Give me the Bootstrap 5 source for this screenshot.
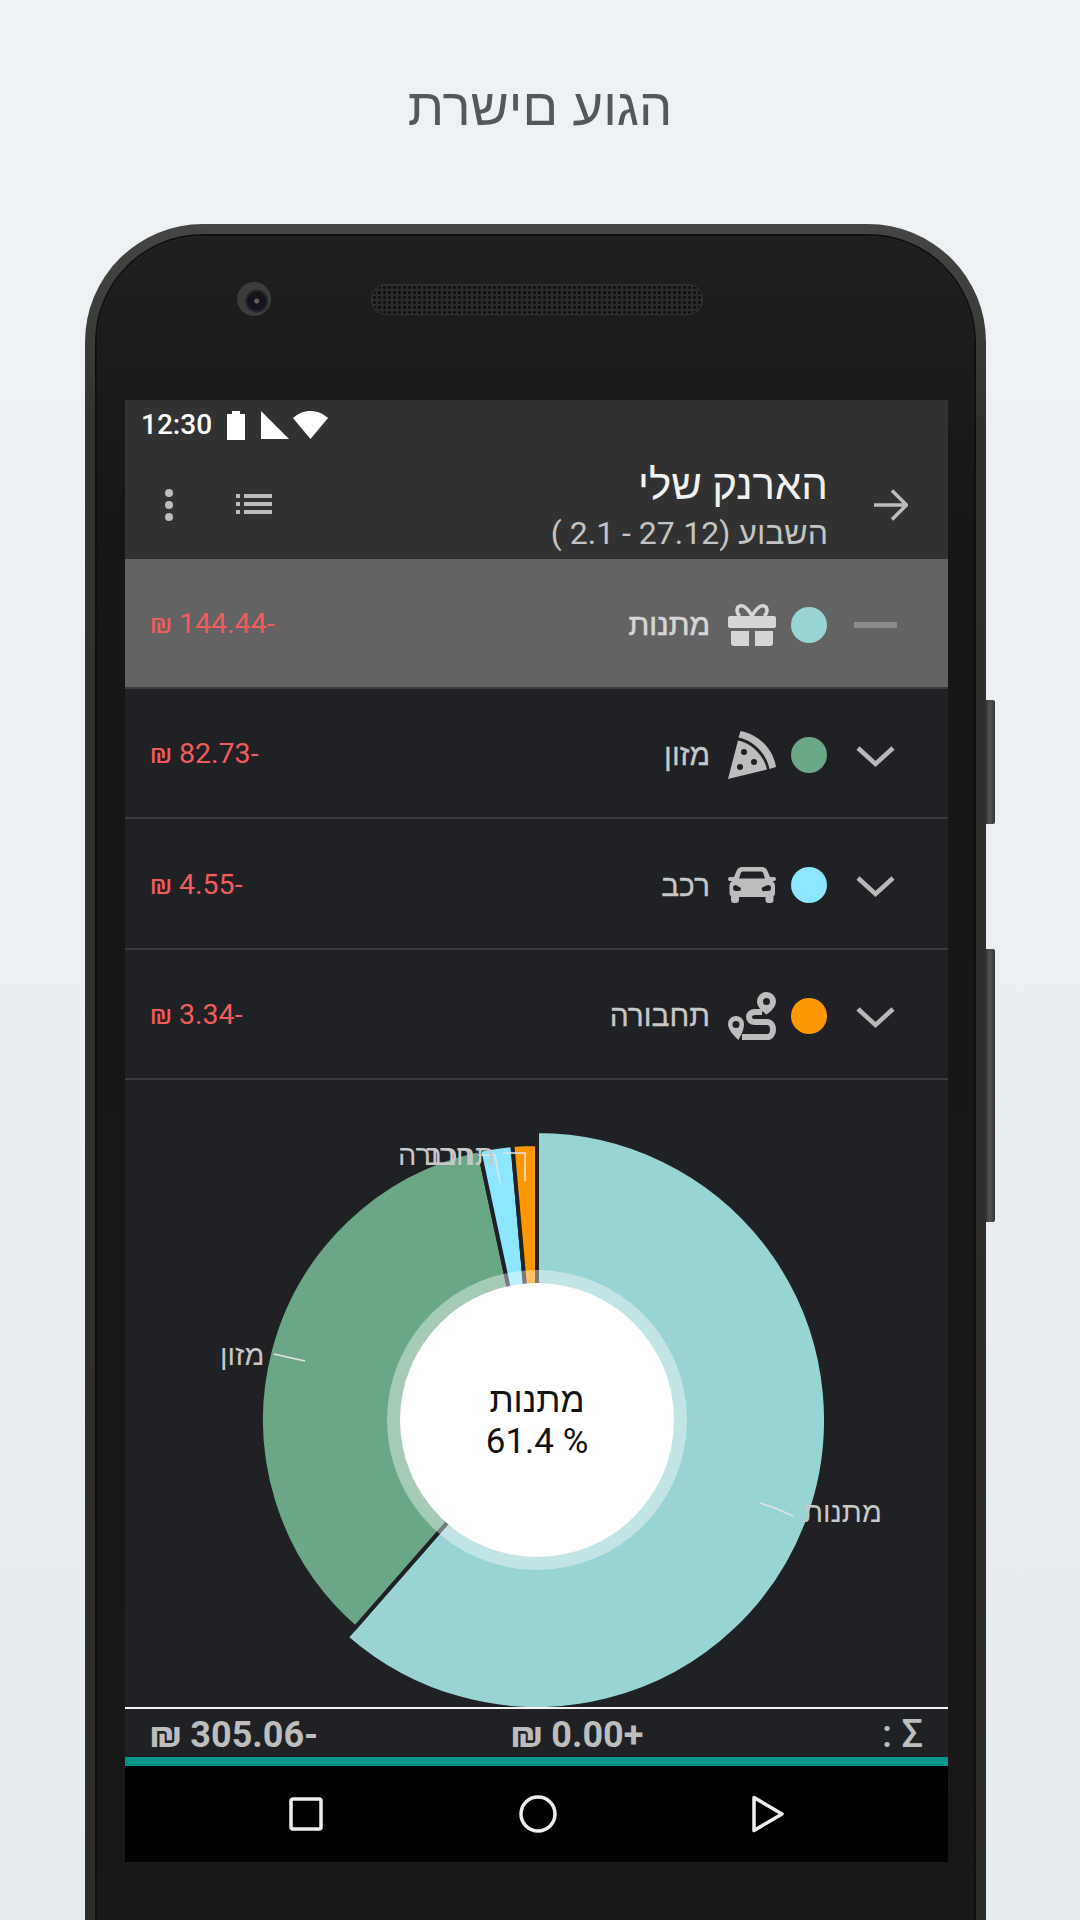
<!DOCTYPE html>
<html lang="he">
<head>
  <meta charset="UTF-8">
  <meta name="viewport" content="width=device-width, initial-scale=1.0">
  <title>הגוע םישרת</title>
  <link href="https://cdn.jsdelivr.net/npm/bootstrap@5.3.0/dist/css/bootstrap.min.css" rel="stylesheet">
  <style>
    html, body { height: 1920px; overflow: hidden; }
    body {
      background: linear-gradient(180deg, #eef2f5 0%, #e6ebee 100%);
      font-family: Roboto, "Liberation Sans", sans-serif;
    }
    .page-head { height: 224px; padding-top: 74px; }
    .page-head h1 { font-size: 52.5px; font-weight: 400; color: #555759; line-height: 66px; margin: 0; font-family: "Liberation Sans", sans-serif; }

    .phone-frame {
      position: relative;
      width: 901px;
      height: 1696px;
      margin-left: 85px;
      padding: 12px 12px 0 12px;
      background: linear-gradient(180deg, #454543 0%, #31312f 12%, #2c2c2a 100%);
      border-radius: 118px 118px 0 0;
    }
    .phone-bezel {
      height: 100%;
      padding: 164px 26px 0 28px;
      background: linear-gradient(180deg, #1f1f1f 0%, #161616 18%, #181818 100%);
      border-radius: 106px 106px 0 0;
      box-shadow: 0 0 0 2px #0f0f0f;
    }
    .side-key {
      position: absolute;
      left: 901px;
      width: 9px;
      background: linear-gradient(90deg, #3a383a 0%, #555256 45%, #343234 100%);
      border-radius: 0 2px 2px 0;
    }
    .side-key-a { top: 476px; height: 124px; }
    .side-key-b { top: 725px; height: 273px; }
    .cam-lens {
      position: absolute;
      left: 152px; top: 58px;
      width: 34px; height: 34px;
      border-radius: 50%;
      background: radial-gradient(circle at 58% 56%, #6d5a5a 0 2px, #14141c 3px 9px, #262628 10px 11px, #3c3c3c 12px);
    }
    .ear-grille {
      position: absolute;
      left: 287px; top: 61px;
      width: 330px; height: 29px;
      border-radius: 14px;
      background-color: #2a2a2a;
      background-image: radial-gradient(circle, #0e0e0e 1.2px, transparent 1.6px);
      background-size: 5px 5px;
      box-shadow: 0 0 0 1px #333;
    }

    .app-screen { width: 823px; height: 1462px; background: #202125; color: #ccc; }
    .app-head { height: 159px; background: #323232; }
    .status-line { height: 50px; padding-left: 16px; color: #fff; font-size: 28px; font-weight: 500; line-height: 1; }
    .status-line .clock { margin-right: 15px; }
    .status-line .sig-mark { margin-right: 4px; }
    .title-line { height: 109px; }
    .head-arrow { margin-right: 40px; margin-left: 46px; }
    .head-words { margin-top: 8px; }
    .head-title { font-size: 42px; line-height: 48px; color: #f2f2f2; }
    .head-sub { font-size: 32px; line-height: 48px; color: #c4c4c4; }
    .head-tools { margin-right: auto; padding-left: 40px; gap: 63px; }

    .cat-row { height: 130px; border-bottom: 2px solid #3b3c40; padding: 3px 51px 0 25px; font-size: 30px; }
    .cat-row.is-open { background: #636363; }
    .cat-row.is-open .cat-name { -webkit-text-stroke: .6px #d6d6d6; color: #d6d6d6; }
    .cat-row.row-tall { height: 131px; }
    .row-toggle { width: 43px; }
    .row-chevron { margin-top: 4px; }
    .dot-mark { width: 36px; height: 36px; border-radius: 50%; margin-right: 27px; }
    .cat-glyph { width: 48px; margin-right: 15px; }
    .cat-name { margin-right: 18px; color: #c8c8c8; -webkit-text-stroke: .3px #c8c8c8; }
    .cat-sum { margin-right: auto; color: #f25c5c; font-size: 28.5px; }

    .chart-box { height: 627px; }
    .chart-box svg { display: block; }
    .pie-tag { font-size: 29px; fill: #c8c8c8; }
    .pie-mid { font-size: 35px; fill: #111; }

    .sum-strip {
      height: 59px;
      border-top: 2px solid #f4f4f4;
      border-bottom: 9px solid #009688;
      padding: 3px 25px 0 25px;
      font-size: 36px;
      font-weight: 700;
      color: #bdbdbd;
    }
    .sum-out { width: 361px; }
    .sum-sign { font-size: 38px; font-weight: 500; }
    .nav-strip { height: 96px; background: #000; padding-left: 164px; padding-right: 164px; }
  </style>
</head>
<body>

<div class="page-head text-center">
  <h1 dir="rtl">הגוע םישרת</h1>
</div>

<div class="phone-frame">
  <div class="side-key side-key-a"></div>
  <div class="side-key side-key-b"></div>
  <div class="phone-bezel">
    <div class="cam-lens"></div>
    <div class="ear-grille"></div>

    <div class="app-screen d-flex flex-column" dir="rtl">
      <div class="app-head">
        <div class="status-line d-flex align-items-center" dir="ltr">
          <span class="clock">12:30</span>
          <svg width="18" height="29" viewBox="0 0 18 29" class="me-3"><path fill="#fff" d="M5 0h8v3h5v26H0V3h5z"/></svg>
          <svg class="sig-mark" width="28" height="28" viewBox="0 0 28 28"><path fill="#fff" d="M0 0l28 28H0z"/></svg>
          <svg width="35" height="28" viewBox="0 0 35 28"><path fill="#fff" d="M17.5 28L0 7C5 2.500 11 0 17.500 0S30 2.500 35 7z"/></svg>
        </div>
        <div class="title-line d-flex align-items-center">
          <svg class="head-arrow" width="34" height="32" viewBox="0 0 34 32"><path fill="none" stroke="#bdbdbd" stroke-width="3.500" d="M0 16h32M18 1.500L32.500 16 18 30.500"/></svg>
          <div class="head-words">
            <div class="head-title">הארנק שלי</div>
            <div class="head-sub">השבוע (27.12 - 2.1 )</div>
          </div>
          <div class="head-tools d-flex align-items-center">
            <svg width="36" height="21" viewBox="0 0 36 21"><path fill="#bdbdbd" d="M0 0h4v4H0zM8 0h28v4H8zM0 8h4v4H0zM8 8h28v4H8zM0 16h4v4H0zM8 16h28v4H8z"/></svg>
            <svg width="8" height="32" viewBox="0 0 8 32"><g fill="#bdbdbd"><circle cx="4" cy="4" r="4"/><circle cx="4" cy="16" r="4"/><circle cx="4" cy="28" r="4"/></g></svg>
          </div>
        </div>
      </div>

      <div class="cat-row is-open d-flex align-items-center">
        <svg class="row-toggle" height="6" viewBox="0 0 43 6"><path fill="#8c8c8c" d="M0 0h43v6H0z"/></svg>
        <span class="dot-mark" style="background:#98d4d4"></span>
        <svg class="cat-glyph" height="42" viewBox="0 0 48 42"><g fill="#d6d6d6"><path d="M2 12h44a2 2 0 0 1 2 2v8a2 2 0 0 1-2 2H2a2 2 0 0 1-2-2v-8a2 2 0 0 1 2-2zM3 27h18v15H6a3 3 0 0 1-3-3zM27 27h18v12a3 3 0 0 1-3 3H27z"/></g><path fill="none" stroke="#d6d6d6" stroke-width="3.500" d="M24 12C20 4 15 1 12 2c-4 1-4 7 0 10M24 12c4-8 9-11 12-10 4 1 4 7 0 10"/></svg>
        <span class="cat-name">מתנות</span>
        <span class="cat-sum">-144.44 ₪</span>
      </div>

      <div class="cat-row d-flex align-items-center">
        <svg class="row-toggle row-chevron" height="24" viewBox="0 0 43 24"><path fill="none" stroke="#b8b8b8" stroke-width="4.500" d="M4 3l17.500 16L39 3"/></svg>
        <span class="dot-mark" style="background:#6aa786"></span>
        <svg class="cat-glyph" height="48" viewBox="0 0 48 48"><g fill="#bdbdbd"><path fill-rule="evenodd" d="M10 9.500C23 12 36 24 39 38.500L0 48zM16 18a3 3 0 1 0 0 6 3 3 0 0 0 0-6zM26 28a3 3 0 1 0 0 6 3 3 0 0 0 0-6zM12 33a3 3 0 1 0 0 6 3 3 0 0 0 0-6z"/><path d="M12.500 0C30 3.500 45 17 48 36l-6.500 2C38 22 26 10 10.500 6.500z"/></g></svg>
        <span class="cat-name">מזון</span>
        <span class="cat-sum">-82.73 ₪</span>
      </div>

      <div class="cat-row row-tall d-flex align-items-center">
        <svg class="row-toggle row-chevron" height="24" viewBox="0 0 43 24"><path fill="none" stroke="#b8b8b8" stroke-width="4.500" d="M4 3l17.500 16L39 3"/></svg>
        <span class="dot-mark" style="background:#8ce6ff"></span>
        <svg class="cat-glyph" height="36" viewBox="0 0 48 36"><path fill="#bdbdbd" fill-rule="evenodd" d="M14 0h20c2.500 0 4.500 1.500 5.500 4L42 10h4a2 2 0 0 1 2 2c0 1-1 2-2 2h-1.500c1.500 1 2.500 3 2.500 5v7c0 1.500-.5 2.500-1.500 3v4a3 3 0 0 1-3 3h-2a3 3 0 0 1-3-3v-3H11v3a3 3 0 0 1-3 3H6a3 3 0 0 1-3-3v-4c-1-.5-1.500-1.500-1.500-3v-7c0-2 1-4 2.500-5H2c-1 0-2-1-2-2a2 2 0 0 1 2-2h4l2.500-6c1-2.500 3-4 5.500-4zM15 4.500c-1 0-1.800.5-2.200 1.500L11 11.500h26L35.200 6c-.4-1-1.200-1.500-2.200-1.500zM8 18a3 3 0 0 0 0 6h3a2 2 0 0 0 0-4zM40 18l-5 2a2 2 0 0 0 2 4h3a3 3 0 0 0 0-6z"/></svg>
        <span class="cat-name">רכב</span>
        <span class="cat-sum">-4.55 ₪</span>
      </div>

      <div class="cat-row d-flex align-items-center">
        <svg class="row-toggle row-chevron" height="24" viewBox="0 0 43 24"><path fill="none" stroke="#b8b8b8" stroke-width="4.500" d="M4 3l17.500 16L39 3"/></svg>
        <span class="dot-mark" style="background:#ff9800"></span>
        <svg class="cat-glyph" height="48" viewBox="0 0 48 48"><g fill="#bdbdbd"><path fill-rule="evenodd" d="M38.500 0a9.500 9.500 0 0 1 9.500 9.500c0 5-5 10-9.500 13-4.500-3-9.500-8-9.500-13A9.500 9.500 0 0 1 38.500 0zm0 6a3.500 3.500 0 1 0 0 7 3.500 3.500 0 0 0 0-7zM8 24a8 8 0 0 1 8 8c0 6-3 11-5.500 16C7 45 0 38 0 32a8 8 0 0 1 8-8zm0 5a3.500 3.500 0 1 0 0 7 3.500 3.500 0 0 0 0-7z"/></g><path fill="none" stroke="#bdbdbd" stroke-width="6" d="M34 20h-7c-8 0-8 10 0 10h12c8 0 8 15 0 15H14"/></svg>
        <span class="cat-name">תחבורה</span>
        <span class="cat-sum">-3.34 ₪</span>
      </div>

      <div class="chart-box" dir="ltr">
        <svg width="823" height="627" viewBox="125 1080 823 627">
          <g id="pie-slices"></g>
          <circle cx="537" cy="1420" r="150" fill="#fff" fill-opacity=".4"/>
          <circle cx="537" cy="1420" r="137" fill="#fff"/>
          <g fill="none" stroke="#e4e4e4" stroke-width="1.500">
            <path d="M793 1516l-18-8-15-5"/>
            <path d="M274 1354l13 3 18 4"/>
            <path d="M500 1183l-5-28h-17"/>
            <path d="M525 1181v-28h-22"/>
          </g>
          <text class="pie-tag" x="803" y="1522">מתנות</text>
          <text class="pie-tag" x="220" y="1365">מזון</text>
          <text class="pie-tag" x="425" y="1165">רכב</text>
          <text class="pie-tag" x="398" y="1165">תחבורה</text>
          <text class="pie-mid" x="537" y="1412" text-anchor="middle">מתנות</text>
          <text class="pie-mid" x="537" y="1453" text-anchor="middle">61.4 %</text>
        </svg>
      </div>

      <div class="sum-strip d-flex align-items-center" dir="ltr">
        <span class="sum-out">₪ 305.06-</span>
        <span>₪ 0.00+</span>
        <span class="sum-sign ms-auto">: Σ</span>
      </div>

      <div class="nav-strip d-flex align-items-center justify-content-between" dir="ltr">
        <svg width="34" height="34" viewBox="0 0 34 34"><rect x="2" y="2" width="30" height="30" rx="2" fill="none" stroke="#eee" stroke-width="3.500"/></svg>
        <svg width="38" height="38" viewBox="0 0 38 38"><circle cx="19" cy="19" r="17" fill="none" stroke="#eee" stroke-width="3.500"/></svg>
        <svg width="32" height="38" viewBox="0 0 32 38"><path d="M2 2.500L30 19 2 35.500z" fill="none" stroke="#eee" stroke-width="3.500" stroke-linejoin="round"/></svg>
      </div>
    </div>
  </div>
</div>

<script>
  // pie chart slices, angles clockwise from top
  const slices = [
    { value: 144.44, color: '#98d4d4', r: 289 },
    { value: 82.73, color: '#6aa786', r: 276 },
    { value: 4.55, color: '#8ce6ff', r: 276 },
    { value: 3.34, color: '#ff9800', r: 276 }
  ];
  const total = slices.reduce((sum, s) => sum + s.value, 0);
  const group = document.getElementById('pie-slices');
  let start = 0;

  function point(r, deg) {
    const rad = deg * Math.PI / 180;
    return (537 + r * Math.sin(rad)).toFixed(1) + ' ' + (1420 - r * Math.cos(rad)).toFixed(1);
  }

  slices.forEach(s => {
    const sweep = s.value / total * 360;
    const path = document.createElementNS('http://www.w3.org/2000/svg', 'path');
    path.setAttribute('d', `M537 1420L${point(s.r, start)}A${s.r} ${s.r} 0 ${sweep > 180 ? 1 : 0} 1 ${point(s.r, start + sweep)}Z`);
    path.setAttribute('fill', s.color);
    path.setAttribute('stroke', '#202125');
    path.setAttribute('stroke-width', '4');
    group.appendChild(path);
    start += sweep;
  });
</script>

<script src="https://cdn.jsdelivr.net/npm/bootstrap@5.3.0/dist/js/bootstrap.bundle.min.js"></script>
</body>
</html>
